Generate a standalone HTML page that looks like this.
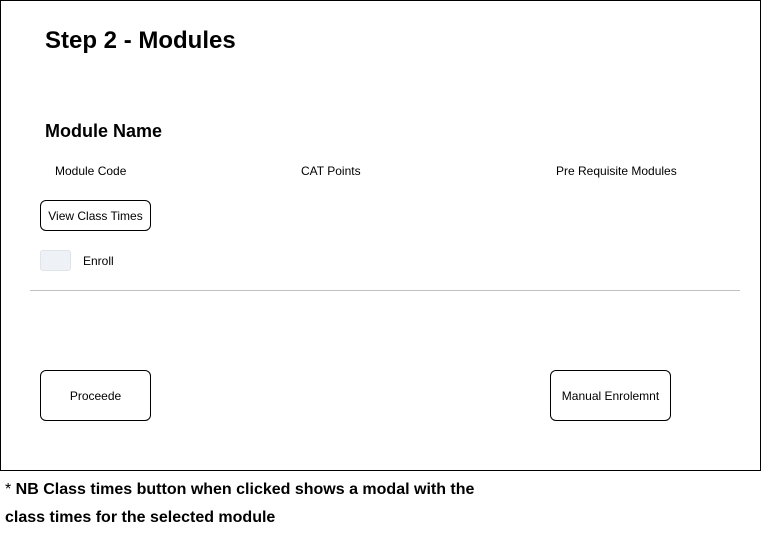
<!DOCTYPE html>
<html><head><style>
body{margin:0;width:761px;height:537px;background:#fff;font-family:"Liberation Sans",Arial,sans-serif;position:relative;overflow:hidden;color:#000}
.a{position:absolute}
.frame{left:0;top:0;width:759px;height:469px;border:1px solid #000}
.btn{position:absolute;border:1px solid #000;border-radius:6px;background:#fff;font-size:12px;display:flex;align-items:center;justify-content:center}
.sm{font-size:12px}
</style></head><body>
<div class="a frame"></div>
<div class="a" style="left:45px;top:27px;font-size:24px;font-weight:bold">Step 2 - Modules</div>
<div class="a" style="left:45px;top:121px;font-size:18px;font-weight:bold">Module Name</div>
<div class="a sm" style="left:55px;top:164px">Module Code</div>
<div class="a sm" style="left:301px;top:164px">CAT Points</div>
<div class="a sm" style="left:556px;top:164px">Pre Requisite Modules</div>
<div class="btn" style="left:40px;top:200px;width:109px;height:29px">View Class Times</div>
<div class="a" style="left:40px;top:250px;width:29px;height:19px;background:#eef1f5;border:1px solid #dfe3ea;border-radius:3px"></div>
<div class="a sm" style="left:83px;top:254px">Enroll</div>
<div class="a" style="left:30px;top:290px;width:710px;height:1px;background:#c0c0c0"></div>
<div class="btn" style="left:40px;top:370px;width:109px;height:49px">Proceede</div>
<div class="btn" style="left:550px;top:370px;width:119px;height:49px">Manual Enrolemnt</div>
<div class="a" style="left:5px;top:481px;font-size:16px;font-weight:bold"><span style="font-weight:normal">*</span> NB Class times button when clicked shows a modal with the</div>
<div class="a" style="left:5px;top:509px;font-size:16px;font-weight:bold">class times for the selected module</div>
</body></html>
